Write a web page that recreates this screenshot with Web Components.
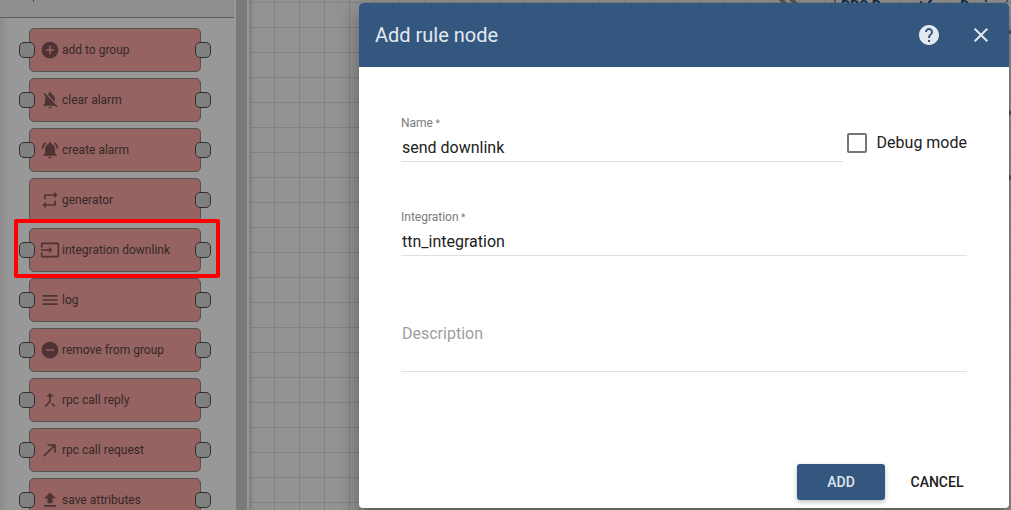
<!DOCTYPE html>
<html lang="en">
<head>
<meta charset="utf-8">
<title>Add rule node</title>
<style>
html, body { margin: 0; height: 100%; }
body { font-family: Roboto, "Noto Sans", sans-serif; overflow: hidden; background: #939393; }
</style>
</head>
<body>
<rule-editor></rule-editor>
<script>
const ICONS = {
  add: 'M12 2C6.48 2 2 6.48 2 12s4.48 10 10 10 10-4.48 10-10S17.52 2 12 2zm5 11h-4v4h-2v-4H7v-2h4V7h2v4h4v2z',
  off: 'M20 18.69L7.84 6.14 5.27 3.49 4 4.76l2.8 2.8v.01c-.52.99-.8 2.16-.8 3.42v5l-2 2v1h13.73l2 2L21 19.72l-1-1.03zM12 22c1.11 0 2-.89 2-2h-4c0 1.11.89 2 2 2zm6-7.32V11c0-3.08-1.64-5.64-4.5-6.32V4c0-.83-.67-1.5-1.5-1.5s-1.5.67-1.5 1.5v.68c-.15.03-.29.08-.42.12-.1.03-.2.07-.3.11h-.01c-.01 0-.01 0-.02.01-.23.09-.46.2-.68.31 0 0-.01 0-.01.01L18 14.68z',
  active: 'M7.58 4.08L6.15 2.65C3.75 4.48 2.17 7.3 2.03 10.5h2c.15-2.65 1.51-4.97 3.55-6.42zm12.39 6.42h2c-.15-3.2-1.73-6.02-4.12-7.85l-1.42 1.43c2.02 1.45 3.39 3.77 3.54 6.42zM18 11c0-3.07-1.64-5.64-4.5-6.32V4c0-.83-.67-1.5-1.5-1.5s-1.5.67-1.5 1.5v.68C7.63 5.36 6 7.92 6 11v5l-2 2v1h16v-1l-2-2v-5zm-6 11c.14 0 .27-.01.4-.04.65-.14 1.18-.58 1.44-1.18.1-.24.15-.5.15-.78h-4c.01 1.1.9 2 2.01 2z',
  repeat: 'M7 7h10v3l4-4-4-4v3H5v6h2V7zm10 10H7v-3l-4 4 4 4v-3h12v-6h-2v4z',
  input: 'M21 3.01H3c-1.1 0-2 .9-2 2V9h2V4.99h18v14.03H3V15H1v4.01c0 1.1.9 1.98 2 1.98h18c1.1 0 2-.88 2-1.98v-14c0-1.11-.9-2-2-2zM11 16l4-4-4-4v3H1v2h10v3z',
  menu: 'M3 18h18v-2H3v2zm0-5h18v-2H3v2zm0-7v2h18V6H3z',
  remove: 'M12 2C6.48 2 2 6.48 2 12s4.48 10 10 10 10-4.48 10-10S17.52 2 12 2zm5 11H7v-2h10v2z',
  merge: 'M17 20.41L18.41 19 15 15.59 13.59 17 17 20.41zM7.5 8H11v5.59L5.59 19 7 20.41l6-6V8h3.5L12 3.5 7.5 8z',
  made: 'M9 5v2h6.59L4 18.59 5.41 20 17 8.41V15h2V5z',
  upload: 'M9 16h6v-6h4l-7-7-7 7h4zm-4 2h14v2H5z',
  help: 'M12 2C6.48 2 2 6.48 2 12s4.48 10 10 10 10-4.48 10-10S17.52 2 12 2zm1 17h-2v-2h2v2zm2.07-7.75l-.9.92C13.45 12.9 13 13.5 13 15h-2v-.5c0-1.1.45-2.1 1.17-2.83l1.24-1.26c.37-.36.59-.86.59-1.41 0-1.1-.9-2-2-2s-2 .9-2 2H8c0-2.21 1.79-4 4-4s4 1.79 4 4c0 .88-.36 1.68-.93 2.25z',
  close: 'M19 6.41L17.59 5 12 10.59 6.41 5 5 6.41 10.59 12 5 17.59 6.41 19 12 13.41 17.59 19 19 17.59 13.41 12z'
};
function define(name, html, init) {
  customElements.define(name, class extends HTMLElement {
    connectedCallback() {
      if (this.shadowRoot) return;
      this.attachShadow({ mode: 'open' }).innerHTML = html;
      if (init) init(this, this.shadowRoot);
    }
  });
}

define('md-icon', `<style>
:host { display: block; width: 20px; height: 20px; flex: none; }
:host([large]) { width: 24px; height: 24px; }
svg { display: block; width: 100%; height: 100%; fill: currentColor; }
</style><svg viewBox="0 0 24 24" aria-hidden="true"><path/></svg>`,
(el, root) => root.querySelector('path').setAttribute('d', ICONS[el.getAttribute('name')]));

define('library-node', `<style>
:host { display: block; position: relative; flex: none; }
.box { display: flex; align-items: center; gap: 2px; box-sizing: border-box; height: 44px; padding: 0 10px;
  border: 1px solid #535353; border-radius: 5px; background: #956361; font-size: 12px; line-height: 16px; }
md-icon { color: #4f3332; }
.label { color: #352828; }
.pin { position: absolute; top: 14px; box-sizing: border-box; width: 16px; height: 16px;
  border: 1px solid #303030; border-radius: 5px; background: #808080; }
.in { left: -10px; } .out { right: -10px; }
:host([source]) .in { display: none; }
.mark { display: none; position: absolute; inset: -9px -19px -6px -15px; border: 4px solid #f00; border-radius: 2px; box-sizing: border-box; }
:host([marked]) { z-index: 1; }
:host([marked]) .mark { display: block; }
</style><div class="box"><md-icon></md-icon><span class="label"><slot></slot></span></div>
<i class="pin in"></i><i class="pin out"></i><i class="mark"></i>`,
(el, root) => {
  const old = root.querySelector('md-icon'), icon = document.createElement('md-icon');
  icon.setAttribute('name', el.getAttribute('icon'));
  old.replaceWith(icon);
});

define('node-library', `<style>
:host { display: flex; min-height: 0; background: #989898; box-shadow: inset 8px 0 8px -6px #868686; }
.panel { flex: 1; min-width: 0; display: flex; flex-direction: column; overflow: hidden; }
header { position: relative; flex: none; box-sizing: border-box; height: 18px; border-bottom: 1px solid #5e5e5e; background: #8e8e8e; }
header i { position: absolute; left: 33px; top: 0; width: 1px; height: 2px; background: #4a4a4a; }
.list { display: flex; flex-direction: column; gap: 6px; padding: 10px 33px 10px 29px; }
.bar { flex: none; width: 11px; margin: 0 2px; background: #7b7b7b; }
</style><div class="panel"><header><i></i></header><div class="list"><slot></slot></div></div><div class="bar"></div>`);

define('rule-canvas', `<style>
:host { display: block; position: relative; overflow: hidden; border-left: 1px solid #808080; background-color: #939393;
  background-image: linear-gradient(#828282 1px, transparent 1px), linear-gradient(90deg, #828282 1px, transparent 1px);
  background-size: 25px 25px; background-position: 0 2px, 24px 0; box-shadow: inset 4px 0 4px -3px #777; }
.tag { position: absolute; right: 3px; top: -20px; box-sizing: border-box; width: 174px; height: 27px; padding: 17px 0 0 6px;
  border: 1px solid #10304c; border-radius: 8px; color: #10304c; font-size: 14px; line-height: 16px; font-weight: 700; white-space: nowrap; }
svg { position: absolute; right: 0; top: 0; width: 240px; height: 190px; fill: none; stroke: #555; stroke-width: 4; }
</style><svg viewBox="0 0 240 190" aria-hidden="true"><path d="M8-3l7 8M18-3l8 8M236 32h4M236 111l4 3M236 175l4 4"/></svg>
<div class="tag">RPC Request from Device</div>`);

define('text-field', `<style>
:host { display: block; min-width: 0; }
.field { display: flex; flex-direction: column; gap: 2px; }
label { font-size: 12px; line-height: 14px; color: #7b7b7b; }
label span { font-size: 10px; line-height: 12px; }
input, textarea { display: block; box-sizing: border-box; width: 100%; margin: 0; border: 0; border-bottom: 1px solid #e0e0e0; border-radius: 0;
  outline: 0; background: none; color: #212121; font: 16px/20px Roboto, "Noto Sans", sans-serif; resize: none; }
input { height: 30px; padding: 2px 1px 0; }
textarea { height: 68px; padding: 20px 1px 0; overflow: hidden; }
::placeholder { color: #9e9e9e; opacity: 1; }
</style><div class="field"></div>`,
(el, root) => {
  const text = el.getAttribute('label');
  root.querySelector('.field').innerHTML = el.hasAttribute('multiline')
    ? `<textarea aria-label="${text}" placeholder="${text}"></textarea>`
    : `<label for="f">${text}<span> *</span></label><input id="f" required value="${el.getAttribute('value')}">`;
});

define('check-box', `<style>
:host { display: block; flex: none; }
label { display: flex; align-items: center; gap: 10px; font-size: 16px; line-height: 20px; color: #212121; }
input { appearance: none; box-sizing: border-box; width: 20px; height: 20px; margin: 0; border: 2px solid #757575; border-radius: 2px; background: #fff; }
</style><label><input type="checkbox"><span><slot></slot></span></label>`);

define('md-button', `<style>
:host { display: block; }
button { min-width: 88px; height: 36px; padding: 0 6px; border: 0; border-radius: 3px; background: none; color: #212121;
  font: 500 14px/20px Roboto, "Noto Sans", sans-serif; text-transform: uppercase; }
:host([primary]) button { background: #34577f; color: #dfe5eb; box-shadow: 0 2px 5px rgba(0,0,0,.26); }
</style><button type="button"><slot></slot></button>`);

define('node-dialog', `<style>
:host { display: flex; flex-direction: column; overflow: hidden; border-radius: 4px; background: #fff;
  box-shadow: 0 7px 8px -4px rgba(0,0,0,.2), 0 13px 19px 2px rgba(0,0,0,.14), 0 5px 24px 4px rgba(0,0,0,.12); }
header { flex: none; display: flex; align-items: center; gap: 12px; height: 64px; padding: 0 8px 0 16px; background: #34577f; color: #e3e9ef; }
h2 { flex: 1; margin: 0; font-size: 20px; line-height: 24px; font-weight: 400; }
header button { display: grid; place-items: center; width: 40px; height: 40px; padding: 0; border: 0; background: none; color: inherit; }
form { flex: 1; min-height: 0; display: flex; flex-direction: column; gap: 48px; padding: 49px 42px 0; }
.row { display: flex; align-items: center; gap: 4px; }
.row text-field { flex: 1; }
.row check-box { margin-top: 8px; }
footer { flex: none; display: flex; justify-content: flex-end; gap: 8px; padding: 8px 28px 8px 8px; }
</style>
<header><h2>Add rule node</h2>
<button type="button" aria-label="Help"><md-icon large name="help"></md-icon></button>
<button type="button" aria-label="Close"><md-icon large name="close"></md-icon></button></header>
<form>
<div class="row"><text-field label="Name" value="send downlink"></text-field><check-box>Debug mode</check-box></div>
<text-field label="Integration" value="ttn_integration"></text-field>
<text-field label="Description" multiline></text-field>
</form>
<footer><md-button primary>Add</md-button><md-button>Cancel</md-button></footer>`,
(el) => el.setAttribute('role', 'dialog'));

define('rule-editor', `<style>
:host { display: grid; grid-template-columns: 249px minmax(0, 1fr); grid-template-rows: minmax(0, 1fr); height: 100vh; position: relative; overflow: hidden; }
.overlay { position: absolute; inset: 0; z-index: 2; display: flex; justify-content: flex-end; padding: 3px 2px 2px; }
node-dialog { flex: 0 1 650px; }
</style>
<node-library>
<library-node icon="add">add to group</library-node>
<library-node icon="off">clear alarm</library-node>
<library-node icon="active">create alarm</library-node>
<library-node icon="repeat" source>generator</library-node>
<library-node icon="input" marked>integration downlink</library-node>
<library-node icon="menu">log</library-node>
<library-node icon="remove">remove from group</library-node>
<library-node icon="merge">rpc call reply</library-node>
<library-node icon="made">rpc call request</library-node>
<library-node icon="upload">save attributes</library-node>
</node-library>
<rule-canvas></rule-canvas>
<div class="overlay"><node-dialog></node-dialog></div>`);
</script>
</body>
</html>
